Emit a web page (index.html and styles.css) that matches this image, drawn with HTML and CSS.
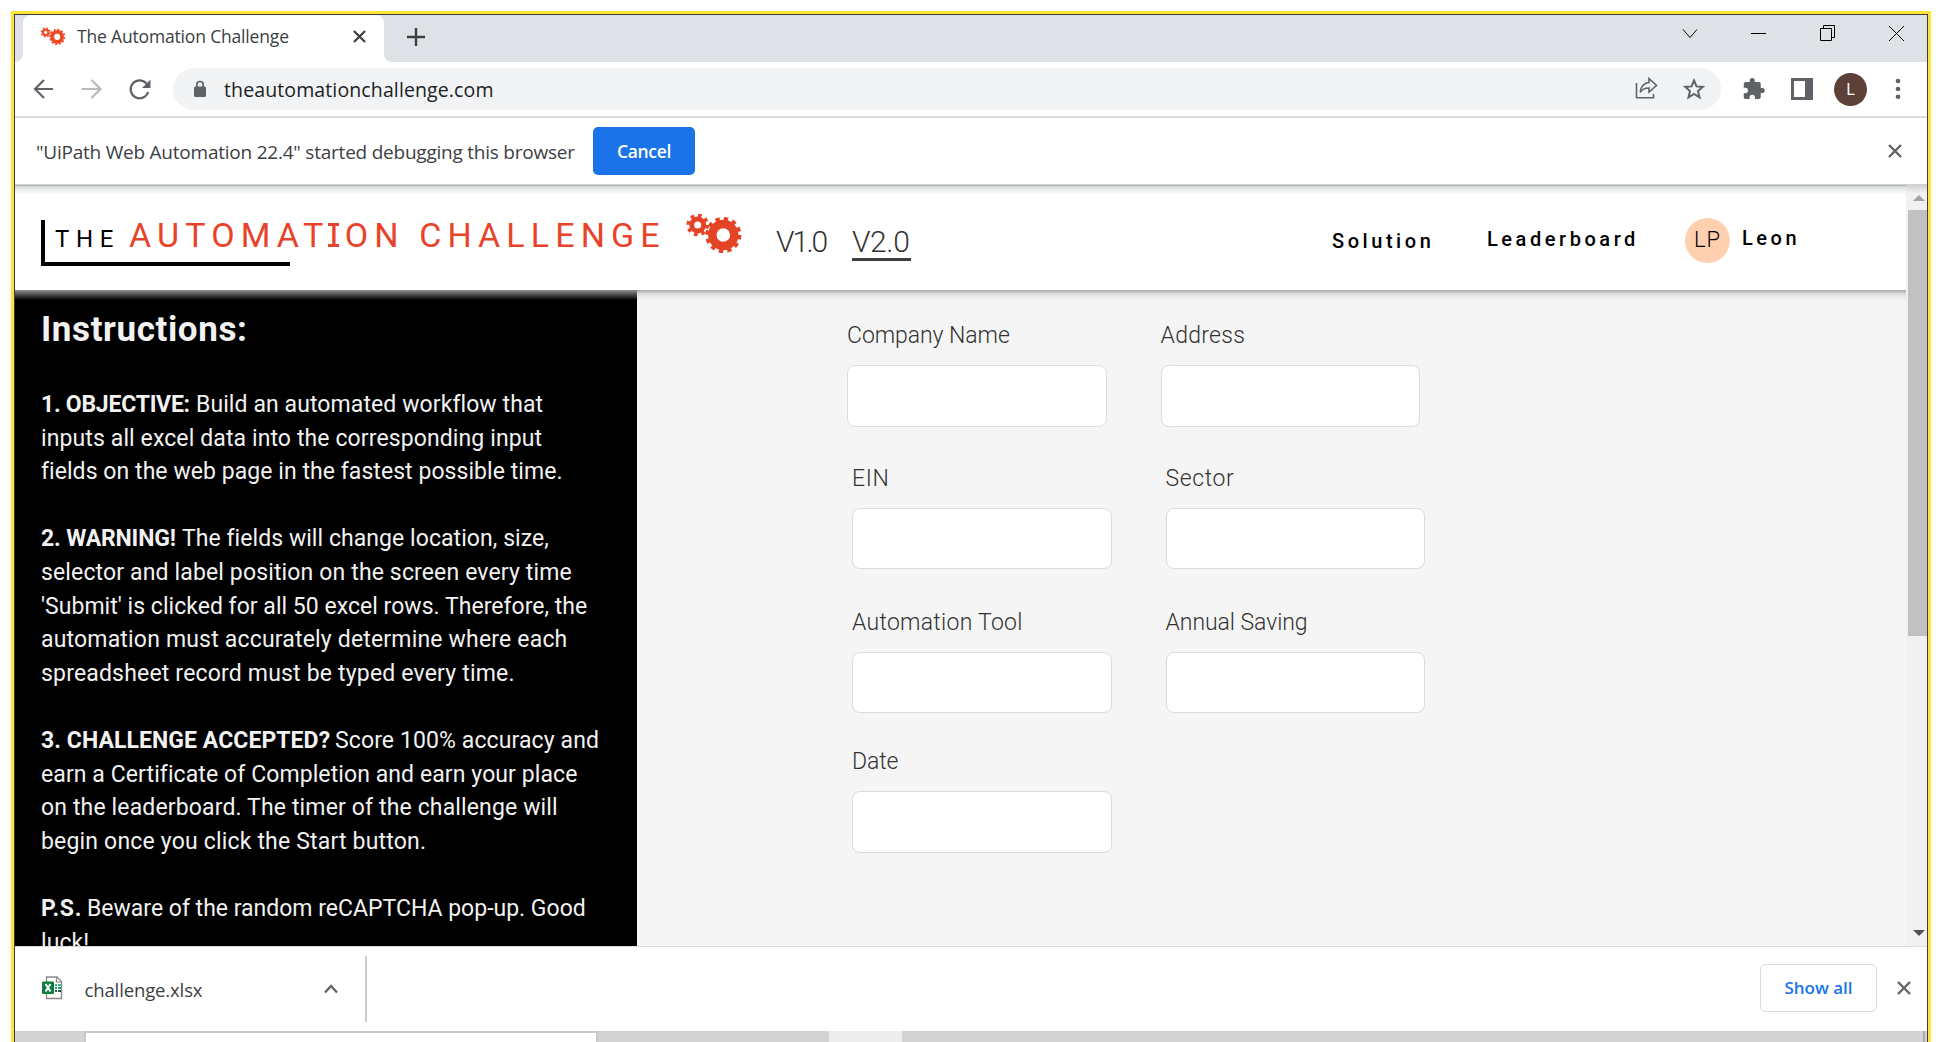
FILE: index.html
```html
<!DOCTYPE html>
<html lang="en">
<head>
<meta charset="utf-8">
<title>The Automation Challenge</title>
<link rel="stylesheet" href="styles.css">
</head>
<body>
<svg class="defs" width="0" height="0">
  <symbol id="gears" viewBox="0 0 58 44">
    <g fill="none" stroke="currentColor">
      <circle cx="38.3" cy="24" r="11" stroke-width="8.4"/>
      <circle cx="38.3" cy="24" r="16" stroke-width="4.2" stroke-dasharray="4.3 4.078"/>
      <circle cx="12.7" cy="14" r="6" stroke-width="5"/>
      <circle cx="12.7" cy="14" r="9.7" stroke-width="3.2" stroke-dasharray="3.7 3.918"/>
    </g>
  </symbol>
  <symbol id="cross" viewBox="0 0 14 14"><path d="M1 1l12 12M13 1l-12 12" fill="none" stroke="currentColor" stroke-width="2.4"/></symbol>
</svg>
<div class="frame">
<div class="window">
  <div class="tabstrip">
    <div class="strip-left"></div>
    <div class="tab">
      <svg class="favicon"><use href="#gears"/></svg>
      <span class="tab-title">The Automation Challenge</span>
      <svg class="tab-close"><use href="#cross"/></svg>
    </div>
    <div class="strip-right">
      <svg class="plus" width="18" height="18" viewBox="0 0 18 18"><path d="M9 0v18M0 9h18" stroke="#3c4043" stroke-width="2.4"/></svg>
      <svg class="controls" width="240" height="24" viewBox="0 0 240 24" fill="none" stroke="#000" stroke-width="1">
        <path d="M13 8.500l7 8 7-8"/>
        <path d="M81 12.500h15"/>
        <path d="M150.500 7.500h11v12h-11zM153.500 7.500v-3h11v12h-3"/>
        <path d="M219 5l15 15M234 5l-15 15"/>
      </svg>
    </div>
  </div>

  <div class="toolbar">
    <svg class="nav-icons" width="120" height="24" viewBox="0 0 120 24" fill="none" stroke-width="2.2">
      <path d="M20 12H2M11 3l-9 9 9 9" stroke="#5f6368"/>
      <path d="M48.500 12H67M58.500 3l9 9-9 9" stroke="#bababc"/>
      <path d="M113.500 6.500A9 9 0 1 0 115.200 15" stroke="#5f6368"/>
      <path d="M117.500 2.500v8.500h-8.500z" fill="#5f6368"/>
    </svg>
    <div class="omnibox">
      <svg class="lock" width="14" height="18" viewBox="0 0 14 18"><rect x="1" y="6.500" width="12" height="10.500" rx="1.500" fill="#5f6368"/><path d="M3.800 7V4.700a3.200 3.200 0 0 1 6.400 0V7" fill="none" stroke="#5f6368" stroke-width="1.700"/></svg>
      <span class="url">theautomationchallenge.com</span>
      <svg class="share" width="24" height="24" viewBox="0 0 24 24" fill="none" stroke="#5f6368" stroke-width="1.600"><path d="M1.500 6v14.700h17V17"/><path d="M14 1.500l7.500 7-7.500 6.500v-4c-4 0-7 1-8.800 4.300C5.700 9.500 9 6.200 14 5.500z"/></svg>
      <svg class="star" width="22" height="22" viewBox="0 0 22 22"><path d="M11 2.500l2.500 5.900 6.300.5-4.800 4.200 1.500 6.200L11 16l-5.500 3.300L7 13.100 2.200 8.900l6.300-.5z" fill="none" stroke="#5f6368" stroke-width="2"/></svg>
    </div>
    <svg class="puzzle" width="22" height="22" viewBox="1.500 1 21.500 22"><path d="M20.500 11H19V7c0-1.100-.9-2-2-2h-4V3.500a2.500 2.500 0 0 0-5 0V5H4c-1.100 0-2 .9-2 2v3.800h1.500a2.700 2.700 0 0 1 0 5.400H2V20c0 1.100.9 2 2 2h3.800v-1.500a2.700 2.700 0 0 1 5.400 0V22H17c1.100 0 2-.9 2-2v-4h1.500a2.500 2.500 0 0 0 0-5z" fill="#5f6368"/></svg>
    <svg class="panel" width="22" height="22" viewBox="0 0 22 22"><path fill="#5f6368" fill-rule="evenodd" d="M0 0h22v22H0zM3 3v16h11V3z"/></svg>
    <div class="profile">L</div>
    <svg class="dots" width="6" height="22" viewBox="0 0 6 22" fill="#5f6368"><circle cx="3" cy="3" r="2.300"/><circle cx="3" cy="11" r="2.300"/><circle cx="3" cy="18.800" r="2.300"/></svg>
  </div>

  <div class="infobar">
    <span class="info-text">"UiPath Web Automation 22.4" started debugging this browser</span>
    <button class="cancel">Cancel</button>
    <svg class="info-close"><use href="#cross"/></svg>
  </div>

  <div class="viewport">
    <div class="page">
      <header class="site-header">
        <div class="logo">
          <span class="logo-the">THE</span>
          <span class="logo-name">AUTOMAT<i class="slab">I</i>ON CHALLENGE</span>
        </div>
        <svg class="logo-gears"><use href="#gears"/></svg>
        <a class="ver ver-1">V1.0</a>
        <a class="ver ver-2">V2.0</a>
        <nav class="menu">
          <a class="menu-solution">Solution</a>
          <a class="menu-board">Leaderboard</a>
          <span class="avatar">LP</span>
          <a class="menu-user">Leon</a>
        </nav>
      </header>
      <div class="content">
        <aside class="sidebar">
          <h1>Instructions:</h1>
          <p><span class="line"><b class="b1">1. OBJECTIVE:</b><span class="s10">Build an automated workflow that</span></span>
          <span class="line s12">inputs all excel data into the corresponding input</span>
          <span class="line s05">fields on the web page in the fastest possible time.</span></p>
          <p><span class="line"><b class="b2">2. WARNING!</b><span class="s05">The fields will change location, size,</span></span>
          <span class="line s14">selector and label position on the screen every time</span>
          <span class="line s03">'Submit' is clicked for all 50 excel rows. Therefore, the</span>
          <span class="line s18">automation must accurately determine where each</span>
          <span class="line s18">spreadsheet record must be typed every time.</span></p>
          <p><span class="line"><b class="b3">3. CHALLENGE ACCEPTED?</b><span class="s12">Score 100% accuracy and</span></span>
          <span class="line s10">earn a Certificate of Completion and earn your place</span>
          <span class="line s14">on the leaderboard. The timer of the challenge will</span>
          <span class="line s18">begin once you click the Start button.</span></p>
          <p><span class="line"><b class="b4">P.S.</b><span>Beware of the random reCAPTCHA pop-up. Good</span></span>
          <span class="line s10">luck!</span></p>
        </aside>
        <form class="form">
          <div class="row row-1">
            <label class="field">Company Name<input type="text"></label>
            <label class="field wide">Address<input type="text"></label>
          </div>
          <div class="row row-2">
            <label class="field wider">EIN<input type="text"></label>
            <label class="field wider">Sector<input type="text"></label>
          </div>
          <div class="row row-3">
            <label class="field wide">Automation Tool<input type="text"></label>
            <label class="field">Annual Saving<input type="text"></label>
          </div>
          <div class="row row-4">
            <label class="field">Date<input type="text"></label>
          </div>
        </form>
      </div>
    </div>
    <div class="scrollbar">
      <div class="arrow-up"></div>
      <div class="thumb"></div>
      <div class="arrow-down"></div>
    </div>
  </div>

  <div class="downloads">
    <svg class="excel" width="22" height="24" viewBox="0 0 22 24">
      <path d="M4.500 1h10.500l4.500 4.500v17h-15z" fill="#fff" stroke="#8a8a8a" stroke-width="1.300"/>
      <path d="M14.500 1v5h5" fill="none" stroke="#8a8a8a" stroke-width="1.200"/>
      <path d="M13 8h2v2h-2zM16 8h3v2h-3z" fill="#33c481"/><path d="M13 11h2v2h-2zM16 11h3v2h-3z" fill="#21a366"/><path d="M13 14h2v2h-2zM16 14h3v2h-3z" fill="#185c37"/>
      <rect x="0" y="5.500" width="12" height="12.500" rx="1" fill="#107c41"/>
      <path d="M3.500 8l5 7.500M8.500 8l-5 7.500" stroke="#fff" stroke-width="2"/>
    </svg>
    <span class="file">challenge.xlsx</span>
    <svg class="chev" width="14" height="10" viewBox="0 0 14 10"><path d="M1 8.500l6-6.500 6 6.500" fill="none" stroke="#5f6368" stroke-width="2.300"/></svg>
    <div class="divider"></div>
    <button class="show-all">Show all</button>
    <svg class="dl-close"><use href="#cross"/></svg>
  </div>
  <div class="behind">
    <div class="sheet"></div>
    <div class="patch"></div>
    <div class="edge"></div>
  </div>
</div>
</div>
</body>
</html>
```

FILE: styles.css
```css
* { box-sizing: border-box; }
body { margin: 0; width: 1942px; height: 1042px; overflow: hidden; background: #fff; font-family: "Open Sans", sans-serif; color: #3c4043; }
svg { display: block; flex: none; }
button { font-family: inherit; padding: 0; }
.defs { position: absolute; }

.frame { margin: 11px 11px 0; height: 1031px; border: 3px solid #ffe337; border-bottom: 0; }
.window { height: 1028px; border: 1px solid #3d3b45; border-bottom: 0; display: flex; flex-direction: column; overflow: hidden; }

/* Tab strip */
.tabstrip { flex: none; height: 47px; display: flex; background: linear-gradient(#dee1e6 50%, #fff 50%); }
.strip-left { width: 8px; background: #dee1e6; border-bottom-right-radius: 8px; }
.tab { width: 361px; display: flex; align-items: center; padding: 0 18px 5px 17px; background: #fff; border-radius: 8px 8px 0 0; }
.favicon { width: 26px; height: 20px; color: #f04a25; }
.tab-title { margin-left: 11px; width: 251px; font-size: 17.5px; letter-spacing: -.17px; white-space: nowrap; }
.tab-close { width: 13px; height: 13px; margin-left: 25px; color: #3c4043; }
.strip-right { flex: 1; display: flex; align-items: center; justify-content: space-between; padding: 0 23px 4px; background: #dee1e6; border-bottom-left-radius: 8px; }
.controls { margin: -8px -6px 0 0; }

/* Toolbar */
.toolbar { flex: none; height: 56px; display: flex; align-items: center; border-bottom: 2px solid #dadce0; }
.nav-icons { margin-left: 18px; }
.omnibox { width: 1548px; height: 42px; margin-left: 20px; border-radius: 21px; background: #f1f3f4; display: flex; align-items: center; padding: 0 16px 0 20px; }
.url { flex: 1; margin-left: 17px; font-size: 19.5px; letter-spacing: .12px; color: #202124; }
.share { margin-right: 24px; }
.puzzle { margin-left: 22px; }
.panel { margin-left: 26px; }
.profile { width: 33px; height: 33px; margin-left: 21px; border-radius: 50%; background: #5d4037; color: #fff; font-size: 17px; line-height: 32px; text-align: center; }
.dots { margin-left: 28px; }

/* Debugging notice */
.infobar { flex: none; height: 67px; display: flex; align-items: center; border-bottom: 1px solid #cfd1d4; padding: 0 25px 0 21px; }
.info-text { width: 557px; padding-top: 1px; font-size: 19px; letter-spacing: -.23px; white-space: nowrap; }
.cancel { width: 102px; height: 48px; border: 0; border-radius: 5px; background: #1a73e8; color: #fff; font-size: 17.5px; font-weight: 600; letter-spacing: -.35px; }
.info-close { width: 14px; height: 14px; margin-left: auto; color: #5f6368; }

/* Web page */
.viewport { flex: none; height: 761px; display: flex; }
.page { width: 1891px; font-family: Roboto, sans-serif; }
.site-header { height: 105px; display: flex; align-items: flex-start; padding-left: 26px; background: linear-gradient(#a9abab, #dfe1e1 2px, #fff 10px); }
.logo { width: 644px; height: 46px; margin-top: 35px; padding-left: 10px; display: flex; align-items: flex-start; border-left: 4px solid #000; background: linear-gradient(#000, #000) 0 100% / 245px 4px no-repeat; white-space: nowrap; }
.logo-the { width: 74px; margin-top: 3.5px; font-size: 24px; line-height: 30px; letter-spacing: 6.6px; color: #000; }
.logo-name { margin-top: -5px; font-size: 34px; line-height: 40px; letter-spacing: 6.12px; color: #e8432a; }
.slab { position: relative; font-style: normal; }
.slab::before, .slab::after { content: ""; position: absolute; left: -1px; width: 11px; height: 3px; background: #e8432a; }
.slab::before { top: 8px; }
.slab::after { bottom: 8px; }
.logo-gears { width: 58px; height: 44px; margin-top: 26px; color: #e44325; }
.ver { margin-top: 41px; font-size: 30px; font-weight: 300; line-height: 32px; color: #333; white-space: nowrap; }
.ver-1 { width: 75px; margin-left: 33px; letter-spacing: -2.3px; }
.ver-2 { width: 59px; margin-left: 1px; border-bottom: 3px solid #3f3f3f; letter-spacing: -.4px; }
.menu { margin-left: auto; display: flex; align-items: flex-start; font-size: 20px; font-weight: 500; line-height: 24px; letter-spacing: 3.55px; color: #000; }
.menu-solution { width: 155px; margin-top: 44px; }
.menu-board { width: 198px; margin-top: 42px; }
.avatar { width: 45px; height: 45px; margin-top: 33px; border-radius: 50%; background: #ffd0b0; font-size: 22px; font-weight: 300; line-height: 43px; letter-spacing: 1px; text-align: center; }
.menu-user { width: 164px; margin: 41px 0 0 12px; }

.content { height: 656px; display: flex; }
.sidebar { width: 622px; padding: 18.5px 0 0 26px; overflow: hidden; background: linear-gradient(#909090, #555 4px, #000 10px); color: #f2f2f2; font-size: 23px; line-height: 33.6px; }
.sidebar h1 { margin: 0 0 37.5px; font-size: 35px; line-height: 42px; letter-spacing: .6px; }
.sidebar p { margin: 0 0 33.6px; }
.line { display: flex; white-space: nowrap; }
.b1 { width: 155px; letter-spacing: -.25px; }
.b2 { width: 141px; letter-spacing: -.15px; }
.b3 { width: 294px; letter-spacing: .07px; }
.b4 { width: 46px; letter-spacing: .8px; }
.s03 { letter-spacing: .03px; }
.s05 { letter-spacing: .06px; }
.s10 { letter-spacing: .09px; }
.s12 { letter-spacing: .11px; }
.s14 { letter-spacing: .14px; }
.s18 { letter-spacing: .18px; }

.form { flex: 1; padding-top: 32px; background: linear-gradient(#a6a6a6, #dedede 4px, #f5f5f5 10px); color: #333; font-size: 23px; font-weight: 300; line-height: 28px; }
.row { display: flex; gap: 54px; padding-left: 215px; }
.row-1 { padding-left: 210px; margin-bottom: 37px; }
.row-2 { margin-bottom: 38px; }
.row-3 { margin-bottom: 33px; }
.field { width: 259.5px; height: 106px; letter-spacing: -.06px; }
.wide { letter-spacing: .28px; }
.wider { letter-spacing: .6px; }
.field input { display: block; width: 259.5px; height: 62px; margin-top: 15px; border: 1px solid #dcdcdc; border-radius: 8px; background: #fff; }
.row-2 input, .row-3 input { height: 61px; }

.scrollbar { width: 21px; display: flex; flex-direction: column; align-items: flex-end; background: linear-gradient(#d0d0d0, #f1f1f1 8px); }
.arrow-up { margin: 10px 2.5px 9px 0; border: 6px solid transparent; border-top: 0; border-bottom-color: #a3a3a3; }
.thumb { width: 19px; height: 426px; background: #c1c1c1; }
.arrow-down { margin: auto 2.5px 10px 0; border: 6px solid transparent; border-bottom: 0; border-top-color: #505050; }

/* Download shelf */
.downloads { flex: none; height: 85px; display: flex; align-items: center; padding: 0 16px 0 27px; border-top: 1px solid #dadce0; background: #fff; }
.excel { margin-top: -3px; }
.file { width: 239px; margin-left: 20.5px; font-size: 18.500px; letter-spacing: -.13px; }
.divider { width: 2px; height: 66px; margin-left: 27.5px; background: #cbcbcb; }
.show-all { width: 117px; height: 48px; margin: -3px 0 0 auto; border: 1px solid #dadce0; border-radius: 6px; background: #fff; color: #1a73e8; font-size: 17px; font-weight: 600; }
.dl-close { width: 14px; height: 14px; margin: -3px 0 0 20px; color: #5f6368; }

/* Strip of the window behind */
.behind { flex: 1; display: flex; background: #d3d3d3; }
.sheet { width: 514px; margin-left: 69px; border: 2px solid #c8c8c8; border-bottom: 0; background: #fff; }
.patch { width: 73px; margin-left: 231px; background: #ededed; }
.edge { width: 2px; margin: 0 2px 0 auto; background: #aaa; }
```
